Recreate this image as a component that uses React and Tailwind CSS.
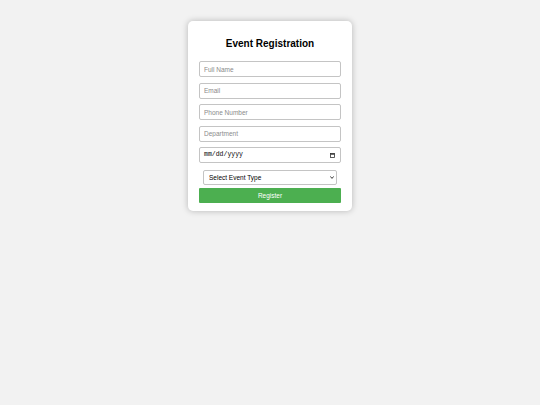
export default function App() {
  const field =
    "block w-full h-[16px] px-[4px] border border-[#c4c4c4] rounded-[2px] bg-white text-[6.5px] text-black placeholder:text-[#8a8a8a] outline-none";
  return (
    <div className="min-h-[405px] bg-[#f2f2f2] pt-[21px] font-['Liberation_Sans',Arial,sans-serif]">
      <div className="mx-auto w-[164px] bg-white rounded-[5px] shadow-[0_0_6px_rgba(0,0,0,0.25)] px-[11px] pt-[14px] pb-[8px]">
        <h2 className="text-center text-[10px] leading-[18px] font-bold text-black mb-[8px]">
          Event Registration
        </h2>
        <form className="flex flex-col" onSubmit={(e) => e.preventDefault()}>
          <input className={field + " mb-[5.5px]"} placeholder="Full Name" />
          <input className={field + " mb-[5.5px]"} placeholder="Email" />
          <input className={field + " mb-[5.5px]"} placeholder="Phone Number" />
          <input className={field + " mb-[5.5px]"} placeholder="Department" />
          {/* date field: mm/dd/yyyy with a small calendar glyph */}
          <div className="flex items-center justify-between w-full h-[16px] pl-[4px] pr-[5px] border border-[#c4c4c4] rounded-[2px] bg-white">
            <span className="text-[6.5px] text-black font-['Liberation_Mono',monospace]">mm/dd/yyyy</span>
            <svg width="5" height="5" viewBox="0 0 5 5">
              <rect x="0.5" y="0.5" width="4" height="4" fill="none" stroke="#333" strokeWidth="0.8" />
              <rect x="0.5" y="0.5" width="4" height="1.2" fill="#333" />
            </svg>
          </div>
          <div className="relative mx-[4px] mt-[7px]">
            <select className="block w-full h-[15px] pl-[5px] pr-[10px] appearance-none border border-[#c4c4c4] rounded-[2px] bg-white text-[6.5px] text-black outline-none">
              <option>Select Event Type</option>
              <option>Workshop</option>
              <option>Seminar</option>
              <option>Conference</option>
            </select>
            <svg
              className="absolute right-[3px] top-[6px] pointer-events-none"
              width="4"
              height="3"
              viewBox="0 0 4 3"
            >
              <path d="M0.3 0.4 L2 2.4 L3.7 0.4" fill="none" stroke="#222" strokeWidth="0.9" />
            </svg>
          </div>
          <button
            type="submit"
            className="mt-[3px] h-[15px] w-full bg-[#4caf50] text-white text-[6.5px] rounded-[1px]"
          >
            Register
          </button>
        </form>
      </div>
    </div>
  );
}
